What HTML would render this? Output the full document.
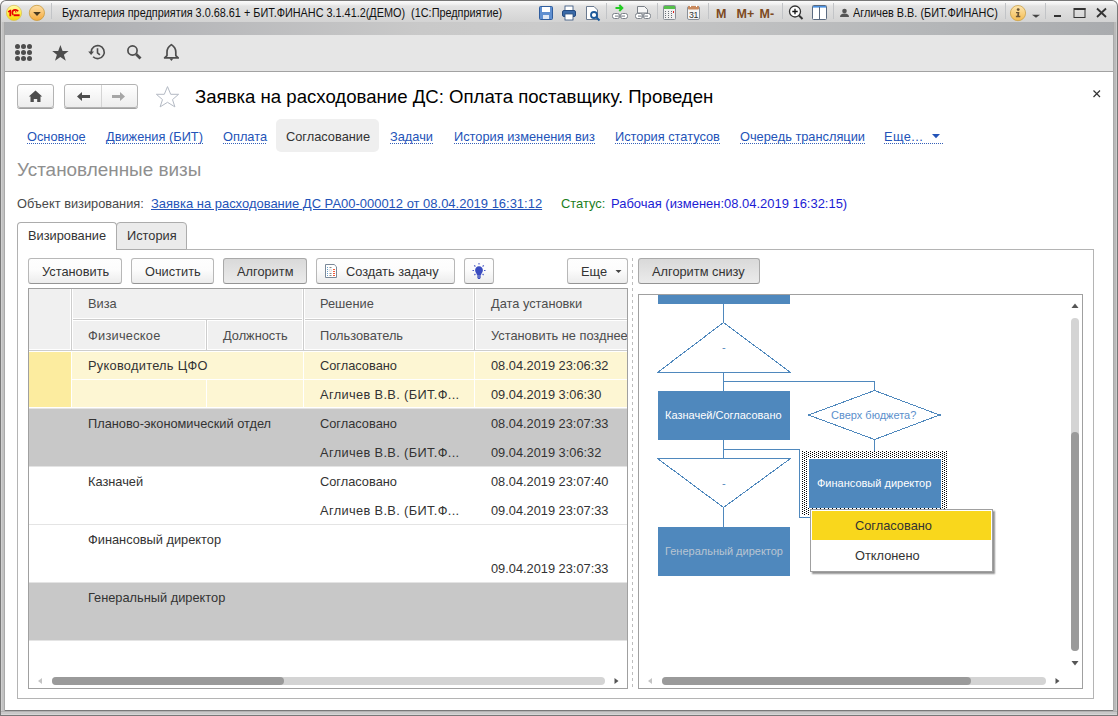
<!DOCTYPE html>
<html><head><meta charset="utf-8">
<style>
*{box-sizing:border-box;margin:0;padding:0}
html,body{width:1118px;height:716px;overflow:hidden;background:#fff}
body{position:relative;font-family:"Liberation Sans",sans-serif;color:#333}
.a{position:absolute}
.t{position:absolute;white-space:nowrap;line-height:1}
.lnk{color:#2353b8;}
.dot{position:absolute;height:1px;background:repeating-linear-gradient(90deg,#3560b8 0 1px,transparent 1px 2px)}
.btn{position:absolute;height:26px;border:1px solid #b8b8b8;border-bottom-color:#949494;border-radius:3px;background:linear-gradient(#fefefe 0,#fcfcfc 45%,#ececec 100%)}
.btn.pr{background:linear-gradient(#d9d9d9,#ebebeb);border-color:#a9a9a9;border-bottom-color:#949494}
</style></head><body>

<!-- window frame -->
<div class="a" style="left:0;top:0;width:1118px;height:716px;background:#787878;border-radius:6px 6px 0 0"></div>
<div class="a" style="left:1px;top:1px;width:1116px;height:21px;background:linear-gradient(#fbfbfb 0,#f2f2f2 3px,#e3e3e3 5px,#d3d3d3 21px);border-radius:5px 5px 0 0"></div>
<div class="a" style="left:1px;top:22px;width:1116px;height:13px;background:linear-gradient(90deg,#a9abae 0,#b4b5b8 150px,#c9c9c9 420px,#cbcbcb 540px,#b4b6b8 940px,#a9abae 1116px)"></div>
<div class="a" style="left:1px;top:22px;width:4px;height:693px;background:linear-gradient(90deg,#d0d0d0 0 1px,#c2c2c2 1px 3px,#a9a9a9 3px 4px)"></div>
<div class="a" style="left:1113px;top:22px;width:4px;height:693px;background:linear-gradient(90deg,#a9a9a9 0 1px,#b9b9b9 1px 3px,#cccccc 3px 4px)"></div>
<div class="a" style="left:1px;top:711px;width:1116px;height:4px;background:linear-gradient(#b2b2b2 0 1px,#c9c9c9 1px 3px,#d6d6d6 3px 4px)"></div>

<!-- toolbar -->
<div class="a" style="left:5px;top:35px;width:1108px;height:37px;background:#e6e6e6;border-bottom:1px solid #a2a2a2"></div>
<!-- content -->
<div class="a" style="left:5px;top:72px;width:1108px;height:638px;background:#fff"></div>


<!-- titlebar icons -->
<svg class="a" style="left:0;top:0" width="1118" height="35" viewBox="0 0 1118 35">
 <defs>
  <linearGradient id="gy" x1="0" y1="0" x2="0" y2="1"><stop offset="0" stop-color="#fffbb0"/><stop offset="0.5" stop-color="#fff04a"/><stop offset="1" stop-color="#f4d400"/></linearGradient>
  <linearGradient id="go2" x1="0" y1="0" x2="0" y2="1"><stop offset="0" stop-color="#fde6b0"/><stop offset="1" stop-color="#f4bc52"/></linearGradient>
  <linearGradient id="go" x1="0" y1="0" x2="0" y2="1"><stop offset="0" stop-color="#fde0a8"/><stop offset="1" stop-color="#f5a93c"/></linearGradient>
 </defs>
 <circle cx="14" cy="12.9" r="7.6" fill="url(#gy)" stroke="#d9c25a" stroke-width="0.8"/>
 <path d="M7.8 11.3 L10.1 9.7 H11.2 V16.2 H9.4 V12 L8.3 12.6 Z" fill="#e80000"/><path d="M18.2 11.3 C17.4 10.3 16.3 9.9 15.2 9.9 C13.4 9.9 12.3 11.2 12.3 12.8 C12.3 13.8 12.8 14.5 13.4 14.9" stroke="#e80000" stroke-width="1.7" fill="none"/><path d="M15 11.6 C15.6 11.6 16 12 16 12.5" stroke="#e80000" stroke-width="1.2" fill="none"/><rect x="13.6" y="14.3" width="6" height="1.9" fill="#e80000"/>
 <circle cx="36.9" cy="12.9" r="7.6" fill="url(#go)" stroke="#c99a3c" stroke-width="0.8"/>
 <path d="M33.2 12 L40.8 12 L37 15.9 Z" fill="#4a3a20"/>
 <rect x="51" y="3" width="1" height="16" fill="#c2c4c7"/>
 <!-- save -->
 <rect x="539.5" y="6.5" width="13" height="13" rx="1" fill="#5f8fd0" stroke="#2f5d9e"/>
 <rect x="542" y="7" width="8" height="5" fill="#fff"/>
 <rect x="543" y="15" width="6" height="4" fill="#dfe8f5"/>
 <!-- print -->
 <rect x="565" y="6" width="8" height="5" fill="#fff" stroke="#2f4f7a" stroke-width="0.8"/>
 <rect x="562.5" y="10.5" width="13" height="6" rx="1.5" fill="#3a6aa8" stroke="#244a80"/>
 <rect x="565" y="14" width="8" height="6" fill="#fff" stroke="#2f4f7a" stroke-width="0.8"/>
 <!-- preview -->
 <path d="M586.5 6.5 H594 L597.5 10 V19.5 H586.5 Z" fill="#fff" stroke="#6a7a90"/>
 <circle cx="594" cy="15" r="3" fill="none" stroke="#1d5a9a" stroke-width="1.8"/>
 <path d="M596 17 L599.5 20.5" stroke="#1d5a9a" stroke-width="2"/>
 <rect x="606" y="3" width="1" height="16" fill="#c2c4c7"/>
 <!-- link icons -->
 <path d="M615.5 8 H622 M619.3 5 L622.3 8 L619.3 11" stroke="#22cc22" stroke-width="2" fill="none"/>
 <rect x="612.5" y="13.5" width="7" height="5" rx="2" fill="#fff" stroke="#7a8088"/>
 <rect x="620.5" y="13.5" width="7" height="5" rx="2" fill="#fff" stroke="#7a8088"/>
 <rect x="615" y="15.5" width="10" height="1.2" fill="#8a9098"/>
 <path d="M637.5 6.5 H644.5 L647.5 9.5 V13 H637.5 Z" fill="#f6f6f6" stroke="#7a8088"/>
 <rect x="635.5" y="13.5" width="7" height="5" rx="2" fill="#fff" stroke="#7a8088"/>
 <rect x="643.5" y="13.5" width="7" height="5" rx="2" fill="#fff" stroke="#7a8088"/>
 <rect x="638" y="15.5" width="10" height="1.2" fill="#8a9098"/>
 <rect x="657" y="3" width="1" height="16" fill="#c2c4c7"/>
 <!-- calculator -->
 <rect x="663.5" y="5.5" width="12" height="14" rx="1" fill="#f0f0f0" stroke="#8a9098"/>
 <rect x="664" y="6" width="11" height="3" fill="#55c04a"/>
 <g fill="#6a7078"><rect x="665" y="11" width="1" height="1"/><rect x="668" y="11" width="1" height="1"/><rect x="671" y="11" width="1" height="1"/><rect x="665" y="13" width="1" height="1"/><rect x="668" y="13" width="1" height="1"/><rect x="671" y="13" width="1" height="1"/><rect x="665" y="15" width="1" height="1"/><rect x="668" y="15" width="1" height="1"/><rect x="671" y="15" width="1" height="1"/><rect x="665" y="17" width="1" height="1"/><rect x="668" y="17" width="1" height="1"/><rect x="671" y="17" width="1" height="1"/></g>
 <rect x="673" y="11" width="1" height="2" fill="#e02020"/>
 <!-- calendar -->
 <rect x="687.5" y="6.5" width="12" height="13" rx="1.5" fill="#f6f6f6" stroke="#8a9098"/>
 <rect x="688" y="6" width="11" height="3.5" rx="1" fill="#c98a5e"/>
 <rect x="690" y="5" width="1" height="2" fill="#fff"/><rect x="696" y="5" width="1" height="2" fill="#fff"/>
 <text x="689" y="18.2" font-family="Liberation Sans" font-size="8.8" fill="#333" letter-spacing="-0.3">31</text>
 <rect x="708" y="3" width="1" height="16" fill="#c2c4c7"/>
 <g font-family="Liberation Sans" font-weight="bold" fill="#7d4a22" font-size="12.5">
  <text x="716" y="17.5">M</text><text x="736.5" y="17.5">M+</text><text x="759.5" y="17.5">M-</text>
 </g>
 <rect x="782" y="3" width="1" height="16" fill="#c2c4c7"/>
 <!-- zoom -->
 <circle cx="795" cy="11.5" r="5.5" fill="#fff" stroke="#333" stroke-width="1.3"/>
 <path d="M792.3 11.5 H797.7 M795 8.8 V14.2" stroke="#111" stroke-width="1.3"/>
 <path d="M799 15.5 L802.5 19" stroke="#333" stroke-width="2"/>
 <!-- panel -->
 <rect x="812.5" y="5.5" width="14" height="14" rx="1" fill="#fff" stroke="#5a6a80"/>
 <rect x="813" y="6" width="13" height="1.6" fill="#4a90e0"/>
 <rect x="819" y="7" width="1" height="12" fill="#5a6a80"/>
 <rect x="833" y="3" width="1" height="16" fill="#c2c4c7"/>
 <!-- user -->
 <circle cx="844.5" cy="11" r="2.3" fill="#555"/>
 <path d="M840 17 Q840 13.5 844.5 13.5 Q849 13.5 849 17 Z" fill="#555"/>
 <rect x="1005" y="3" width="1" height="16" fill="#c2c4c7"/>
 <circle cx="1018" cy="13.1" r="7.6" fill="url(#go2)" stroke="#caa24a" stroke-width="0.8"/>
 <circle cx="1018.2" cy="9.6" r="1.4" fill="#6b5535"/><path d="M1016 11.9 H1019.4 L1018.9 15.8 H1020.3 V17.3 H1015.9 V15.8 H1017.2 L1017.5 13.2 H1016 Z" fill="#6b5535"/>
 <path d="M1032 14.8 H1040 L1036 17.8 Z" fill="#444"/>
 <rect x="1045" y="3" width="1" height="16" fill="#c2c4c7"/>
 <rect x="1054" y="15" width="7" height="2" fill="#333"/>
 <rect x="1074" y="8.5" width="11" height="9" fill="none" stroke="#333" stroke-width="1"/>
 <rect x="1074" y="8" width="11.5" height="2" fill="#333"/>
 <path d="M1097 8.5 L1106 17 M1106 8.5 L1097 17" stroke="#333" stroke-width="1.8"/>
</svg>
<div class="t" style="left:62px;top:7px;font-size:12px;color:#111;transform:scaleX(0.905);transform-origin:0 0">Бухгалтерия предприятия 3.0.68.61 + БИТ.ФИНАНС 3.1.41.2(ДЕМО)&nbsp; (1С:Предприятие)</div>
<div class="t" style="left:853px;top:7px;font-size:12px;color:#111;transform:scaleX(0.905);transform-origin:0 0">Агличев В.В. (БИТ.ФИНАНС)</div>

<!-- toolbar icons -->
<svg class="a" style="left:0;top:35px" width="200" height="36" viewBox="0 35 200 36">
 <g fill="#4d4d4d">
  <circle cx="17.5" cy="46.5" r="2.5"/><circle cx="23.5" cy="46.5" r="2.5"/><circle cx="29.5" cy="46.5" r="2.5"/>
  <circle cx="17.5" cy="52.5" r="2.5"/><circle cx="23.5" cy="52.5" r="2.5"/><circle cx="29.5" cy="52.5" r="2.5"/>
  <circle cx="17.5" cy="58.5" r="2.5"/><circle cx="23.5" cy="58.5" r="2.5"/><circle cx="29.5" cy="58.5" r="2.5"/>
 </g>
 <path d="M60.4 45 L62.6 51.1 L68.6 51.1 L63.9 54.7 L65.8 60.8 L60.4 57.1 L55 60.8 L56.9 54.7 L52.2 51.1 L58.2 51.1 Z" fill="#4d4d4d"/>
 <path d="M91.2 52.1 A6.5 6.5 0 1 1 93.1 56.7" fill="none" stroke="#4d4d4d" stroke-width="1.6"/>
 <path d="M88.2 51.6 H94 L91.1 54.9 Z" fill="#4d4d4d"/>
 <path d="M97.5 48.3 V52.8 L99.9 54.9" fill="none" stroke="#4d4d4d" stroke-width="1.6"/>
 <circle cx="132.5" cy="50.5" r="4.6" fill="none" stroke="#4d4d4d" stroke-width="1.7"/>
 <path d="M136.2 54.2 L140.5 58.5" stroke="#4d4d4d" stroke-width="2.8"/>
 <path d="M171.4 44.6 C168.6 46.4 167 48.6 167 52 V55.6 L164.6 57.9 H178.2 L175.8 55.6 V52 C175.8 48.6 174.2 46.4 171.4 44.6 Z" fill="none" stroke="#4d4d4d" stroke-width="1.7" stroke-linejoin="round"/>
 <path d="M169.4 58.4 H173.4 L171.4 60.9 Z" fill="#4d4d4d"/>
</svg>


<!-- form header -->
<div class="a" style="left:17px;top:84px;width:37px;height:24px;border:1px solid #b3b3b3;border-radius:3px;background:linear-gradient(#fff,#ededed);box-shadow:0 1px 0 #a0a0a0"></div>
<div class="a" style="left:64px;top:84px;width:74px;height:24px;border:1px solid #b3b3b3;border-radius:3px;background:linear-gradient(#fff,#ededed);box-shadow:0 1px 0 #a0a0a0"></div>
<div class="a" style="left:101px;top:85px;width:1px;height:22px;background:#d4d4d4"></div>
<svg class="a" style="left:0;top:72px" width="200" height="40" viewBox="0 72 200 40">
 <path d="M35.5 90.5 L28.8 96.5 H30.5 V102 H33.8 V99 H37.2 V102 H40.5 V96.5 H42.2 Z" fill="#4d4d4d"/>
 <path d="M77 96.5 L82 92 V95 H90 V98 H82 V101 Z" fill="#4d4d4d"/>
 <path d="M125 96.5 L120 92 V95 H112 V98 H120 V101 Z" fill="#a6a6a6"/>
 <path d="M167.5 86.6 L170.7 94.3 L178.6 94.3 L172.5 99.6 L174.9 106.9 L167.5 102.3 L160.1 106.9 L162.5 99.6 L156.4 94.3 L164.3 94.3 Z" fill="none" stroke="#b4bac4" stroke-width="1"/>
</svg>
<div class="t" style="left:195px;top:88px;font-size:18.6px;color:#000">Заявка на расходование ДС: Оплата поставщику. Проведен</div>
<svg class="a" style="left:1090px;top:86px" width="14" height="14" viewBox="1090 86 14 14"><path d="M1093.5 90.5 L1100 97 M1100 90.5 L1093.5 97" stroke="#333" stroke-width="1.2"/></svg>

<!-- nav links -->
<div class="a" style="left:276px;top:119px;width:103px;height:33px;background:#efefef;border-radius:5px"></div>
<div class="t lnk" style="left:27px;top:131px;font-size:12.8px">Основное</div>
<div class="t lnk" style="left:106px;top:131px;font-size:12.8px">Движения (БИТ)</div>
<div class="t lnk" style="left:223px;top:131px;font-size:12.8px">Оплата</div>
<div class="t" style="left:286px;top:131px;font-size:12.8px;color:#333">Согласование</div>
<div class="t lnk" style="left:390px;top:131px;font-size:12.8px">Задачи</div>
<div class="t lnk" style="left:454px;top:131px;font-size:12.8px">История изменения виз</div>
<div class="t lnk" style="left:615px;top:131px;font-size:12.8px">История статусов</div>
<div class="t lnk" style="left:740px;top:131px;font-size:12.8px">Очередь трансляции</div>
<div class="t lnk" style="left:884px;top:131px;font-size:12.8px;letter-spacing:0.4px">Еще...</div>
<svg class="a" style="left:930px;top:131px" width="12" height="10"><path d="M2 3 H10 L6 7.3 Z" fill="#2353b8"/></svg>

<div class="dot" style="left:27px;top:143px;width:59px"></div>
<div class="dot" style="left:106px;top:143px;width:97px"></div>
<div class="dot" style="left:223px;top:143px;width:44px"></div>
<div class="dot" style="left:390px;top:143px;width:44px"></div>
<div class="dot" style="left:454px;top:143px;width:142px"></div>
<div class="dot" style="left:615px;top:143px;width:105px"></div>
<div class="dot" style="left:740px;top:143px;width:125px"></div>
<div class="dot" style="left:884px;top:143px;width:59px"></div>
<div class="t" style="left:17px;top:161px;font-size:18.9px;color:#8f8f8f">Установленные визы</div>
<div class="t" style="left:17px;top:198px;font-size:12.8px;color:#4a4a4a">Объект визирования:</div>
<div class="t lnk" style="left:151px;top:198px;font-size:12.97px;text-decoration:underline">Заявка на расходование ДС РА00-000012 от 08.04.2019 16:31:12</div>
<div class="t" style="left:561px;top:198px;font-size:12.9px;color:#1b7d1b">Статус:</div>
<div class="t" style="left:611px;top:198px;font-size:12.96px;color:#1c1cd4">Рабочая (изменен:08.04.2019 16:32:15)</div>


<!-- tabs panel -->
<div class="a" style="left:17px;top:249px;width:1077px;height:450px;border:1px solid #b4b4b4"></div>
<div class="a" style="left:116px;top:222px;width:71px;height:28px;border:1px solid #acacac;border-radius:4px 4px 0 0;background:#ebebeb"></div>
<div class="a" style="left:17px;top:222px;width:100px;height:28px;border:1px solid #acacac;border-bottom:none;border-radius:4px 4px 0 0;background:#fff"></div>
<div class="t" style="left:28px;top:230px;font-size:12.8px;color:#333">Визирование</div>
<div class="t" style="left:127px;top:230px;font-size:12.8px;color:#333">История</div>

<!-- buttons -->
<div class="btn" style="left:28px;top:258px;width:94px"></div>
<div class="btn" style="left:131px;top:258px;width:83px"></div>
<div class="btn pr" style="left:223px;top:258px;width:84px"></div>
<div class="btn" style="left:316px;top:258px;width:139px"></div>
<div class="btn" style="left:464px;top:258px;width:30px"></div>
<div class="btn" style="left:567px;top:258px;width:61px"></div>
<div class="btn pr" style="left:638px;top:258px;width:122px"></div>
<div class="t" style="left:42px;top:266px;font-size:12.8px;color:#333">Установить</div>
<div class="t" style="left:145px;top:266px;font-size:12.8px;color:#333">Очистить</div>
<div class="t" style="left:237px;top:266px;font-size:12.8px;color:#333">Алгоритм</div>
<div class="t" style="left:346px;top:266px;font-size:12.8px;color:#333">Создать задачу</div>
<div class="t" style="left:581px;top:266px;font-size:12.8px;color:#333">Еще</div>
<div class="t" style="left:652px;top:266px;font-size:12.8px;color:#333">Алгоритм снизу</div>
<svg class="a" style="left:320px;top:260px" width="180" height="24" viewBox="320 260 180 24">
 <path d="M325.5 264.5 H334.2 L336.5 266.8 V277.5 H325.5 Z" fill="#fff" stroke="#7a8898"/>
 <g fill="#6aa0cc"><rect x="327" y="267" width="1" height="1"/><rect x="327" y="269" width="1" height="1"/><rect x="327" y="271" width="1" height="1"/><rect x="327" y="273" width="1" height="1"/><rect x="327" y="275" width="1" height="1"/></g>
 <g fill="#8a8a8a"><rect x="329.5" y="267" width="2" height="1"/><rect x="329.5" y="273" width="2" height="1"/><rect x="329.5" y="275" width="2" height="1"/></g>
 <circle cx="330.4" cy="270.4" r="1.2" fill="none" stroke="#c8c8c8" stroke-width="0.6"/>
 <g fill="#f05a3a"><rect x="333" y="269" width="2" height="1"/><rect x="333" y="271" width="2" height="1"/><rect x="333" y="273" width="2" height="1"/><rect x="333" y="275" width="2" height="1"/></g>
 <path d="M479 266.3 C476.6 266.3 475.1 268.1 475.1 270.3 C475.1 272.2 476.6 273.3 477 275 H481 C481.4 273.3 482.9 272.2 482.9 270.3 C482.9 268.1 481.4 266.3 479 266.3 Z" fill="#3a4cc0"/>
 <path d="M477.2 275 H480.8 V278 C480.3 278.8 477.7 278.8 477.2 278 Z" fill="#6270c8"/>
 <rect x="478" y="278" width="2" height="1" fill="#3a4cc0"/>
 <g stroke="#4a5ac4" stroke-width="1.1"><path d="M479 263 V264.5"/><path d="M472.5 270.5 H474"/><path d="M484 270.5 H485.5"/><path d="M474.2 265.3 L475.4 266.5"/><path d="M483.8 265.3 L482.6 266.5"/><path d="M474.4 275 L475.4 274"/><path d="M483.6 275 L482.6 274"/></g>
</svg>
<svg class="a" style="left:612px;top:266px" width="14" height="10" viewBox="612 266 14 10"><path d="M615.5 270 H621.5 L618.5 273 Z" fill="#444"/></svg>
<!-- dashed splitter -->
<div class="a" style="left:632px;top:258px;width:1px;height:432px;background:repeating-linear-gradient(180deg,#bdbdbd 0 3px,transparent 3px 6px)"></div>

<!-- table -->
<div class="a" style="left:28px;top:288px;width:600px;height:401px;border:1px solid #a0a0a0;background:#fff;overflow:hidden">
 <!-- header -->
 <div class="a" style="left:0;top:0;width:598px;height:62px;background:#f0f0f0"></div>
 <div class="a" style="left:0;top:61px;width:598px;height:1px;background:#cdcdcd"></div>
 <div class="a" style="left:0;top:60px;width:598px;height:1px;background:#fff"></div>
 <div class="a" style="left:42px;top:30px;width:556px;height:1px;background:#cdcdcd"></div>
 <div class="a" style="left:43px;top:29px;width:555px;height:1px;background:#fff"></div>
 <div class="a" style="left:43px;top:31px;width:555px;height:1px;background:#fff"></div>
 <div class="a" style="left:41px;top:0;width:1px;height:61px;background:#fff"></div>
 <div class="a" style="left:42px;top:0;width:1px;height:61px;background:#cdcdcd"></div>
 <div class="a" style="left:43px;top:0;width:1px;height:61px;background:#fff"></div>
 <div class="a" style="left:273px;top:0;width:1px;height:61px;background:#fff"></div>
 <div class="a" style="left:274px;top:0;width:1px;height:61px;background:#cdcdcd"></div>
 <div class="a" style="left:275px;top:0;width:1px;height:61px;background:#fff"></div>
 <div class="a" style="left:444px;top:0;width:1px;height:61px;background:#fff"></div>
 <div class="a" style="left:445px;top:0;width:1px;height:61px;background:#cdcdcd"></div>
 <div class="a" style="left:446px;top:0;width:1px;height:61px;background:#fff"></div>
 <div class="a" style="left:176px;top:31px;width:1px;height:30px;background:#fff"></div>
 <div class="a" style="left:177px;top:31px;width:1px;height:30px;background:#cdcdcd"></div>
 <div class="a" style="left:178px;top:31px;width:1px;height:30px;background:#fff"></div>
 <!-- body rows -->
 <div class="a" style="left:0;top:62px;width:598px;height:57px;background:#fdf6d3"></div>
 <div class="a" style="left:0;top:62px;width:42px;height:56px;background:#fcec9f"></div>
 <div class="a" style="left:42px;top:62px;width:1px;height:57px;background:#fff"></div>
 <div class="a" style="left:0;top:62px;width:598px;height:1px;background:#fff"></div>
 <div class="a" style="left:43px;top:90px;width:555px;height:1px;background:#fff"></div>
 <div class="a" style="left:0;top:118px;width:598px;height:1px;background:#fff"></div>
 <div class="a" style="left:177px;top:91px;width:1px;height:27px;background:#fff"></div>
 <div class="a" style="left:274px;top:62px;width:1px;height:56px;background:#fff"></div>
 <div class="a" style="left:445px;top:62px;width:1px;height:56px;background:#fff"></div>
 <div class="a" style="left:0;top:119px;width:598px;height:1px;background:#e4e4e4"></div>
 <div class="a" style="left:0;top:120px;width:598px;height:57px;background:#c8c8c8"></div>
 <div class="a" style="left:0;top:177px;width:598px;height:1px;background:#e4e4e4"></div>
 <div class="a" style="left:0;top:235px;width:598px;height:1px;background:#e4e4e4"></div>
 <div class="a" style="left:0;top:293px;width:598px;height:1px;background:#e4e4e4"></div>
 <div class="a" style="left:0;top:294px;width:598px;height:57px;background:#c8c8c8"></div>
 <div class="a" style="left:0;top:351px;width:598px;height:1px;background:#e4e4e4"></div>
</div>

<div class="a" style="left:29px;top:289px;width:598px;height:399px;overflow:hidden">
 <div class="t" style="left:59px;top:9px;font-size:12.8px;color:#4d4d4d">Виза</div>
 <div class="t" style="left:291px;top:9px;font-size:12.8px;color:#4d4d4d">Решение</div>
 <div class="t" style="left:462px;top:9px;font-size:12.8px;color:#4d4d4d">Дата установки</div>
 <div class="t" style="left:59px;top:41px;font-size:12.8px;color:#4d4d4d;letter-spacing:0.25px">Физическое</div>
 <div class="t" style="left:194px;top:41px;font-size:12.8px;color:#4d4d4d">Должность</div>
 <div class="t" style="left:291px;top:41px;font-size:12.8px;color:#4d4d4d">Пользователь</div>
 <div class="t" style="left:462px;top:41px;font-size:12.8px;color:#4d4d4d">Установить не позднее</div>
 <div class="t" style="left:59px;top:71px;font-size:12.8px;color:#333;letter-spacing:0.28px">Руководитель ЦФО</div>
 <div class="t" style="left:291px;top:71px;font-size:12.8px;color:#333">Согласовано</div>
 <div class="t" style="left:462px;top:71px;font-size:12.8px;color:#333">08.04.2019 23:06:32</div>
 <div class="t" style="left:291px;top:100px;font-size:12.8px;color:#333;letter-spacing:0.36px">Агличев В.В. (БИТ.Ф...</div>
 <div class="t" style="left:462px;top:100px;font-size:12.8px;color:#333">09.04.2019 3:06:30</div>
 <div class="t" style="left:59px;top:129px;font-size:12.8px;color:#333">Планово-экономический отдел</div>
 <div class="t" style="left:291px;top:129px;font-size:12.8px;color:#333">Согласовано</div>
 <div class="t" style="left:462px;top:129px;font-size:12.8px;color:#333">08.04.2019 23:07:33</div>
 <div class="t" style="left:291px;top:158px;font-size:12.8px;color:#333;letter-spacing:0.36px">Агличев В.В. (БИТ.Ф...</div>
 <div class="t" style="left:462px;top:158px;font-size:12.8px;color:#333">09.04.2019 3:06:32</div>
 <div class="t" style="left:59px;top:187px;font-size:12.8px;color:#333">Казначей</div>
 <div class="t" style="left:291px;top:187px;font-size:12.8px;color:#333">Согласовано</div>
 <div class="t" style="left:462px;top:187px;font-size:12.8px;color:#333">08.04.2019 23:07:40</div>
 <div class="t" style="left:291px;top:216px;font-size:12.8px;color:#333;letter-spacing:0.36px">Агличев В.В. (БИТ.Ф...</div>
 <div class="t" style="left:462px;top:216px;font-size:12.8px;color:#333">09.04.2019 23:07:33</div>
 <div class="t" style="left:59px;top:245px;font-size:12.8px;color:#333">Финансовый директор</div>
 <div class="t" style="left:462px;top:274px;font-size:12.8px;color:#333">09.04.2019 23:07:33</div>
 <div class="t" style="left:59px;top:303px;font-size:12.8px;color:#333">Генеральный директор</div>
</div>
<!-- table scrollbar -->
<div class="a" style="left:52px;top:677px;width:553px;height:8px;border-radius:4px;background:#d4d4d4"></div>
<div class="a" style="left:52px;top:677px;width:232px;height:8px;border-radius:4px;background:#9a9a9a"></div>
<svg class="a" style="left:30px;top:670px" width="600" height="20" viewBox="30 670 600 20">
 <path d="M38 681 L42 678 V684 Z" fill="#c4c4c4"/>
 <path d="M618.5 681 L614.5 678 V684 Z" fill="#555"/>
</svg>


<!-- diagram panel -->
<div class="a" style="left:638px;top:294px;width:445px;height:395px;border:1px solid #a0a0a0;background:#fff"></div>
<svg class="a" style="left:639px;top:295px" width="443" height="393" viewBox="639 295 443 393" shape-rendering="crispEdges">
 <defs>
  <pattern id="chk" x="802" y="451" width="4" height="2" patternUnits="userSpaceOnUse"><rect x="0" y="0" width="1" height="1" fill="#000"/><rect x="2" y="1" width="1" height="1" fill="#000"/></pattern>
 </defs>
 <g fill="#4f88bd">
  <rect x="658" y="295" width="132" height="9"/>
  <rect x="658" y="391" width="132" height="49"/>
  <rect x="658" y="527" width="132" height="49"/>
 </g>
 <g stroke="#4f88bd" stroke-width="1" fill="none">
  <path d="M723.5 304 V322"/>
  <path d="M723.5 372 V391"/>
  <path d="M723.5 381.5 H874.5 V391"/>
  <path d="M723.5 440 V458"/>
  <path d="M723.5 449.5 H799.5 V517.5 H811"/>
  <path d="M723.5 507 V527"/>
  <path d="M874.5 439 V451"/>
 </g>
 <g stroke="#4f88bd" stroke-width="1" fill="none" shape-rendering="crispEdges">
  <path d="M723.5 322.5 L790.5 372.5 H657.5 Z"/>
  <path d="M657.5 458.5 H790.5 L723.5 507.5 Z"/>
  <path d="M874.5 390.5 L939.5 415 L874.5 439.5 L808.5 415 Z"/>
 </g>
 <rect x="939" y="414" width="2" height="2" fill="#4f88bd"/>
 <rect x="802" y="451" width="146" height="64" fill="url(#chk)"/>
 <rect x="807" y="458" width="135" height="50" fill="#fff"/>
 <rect x="809" y="459" width="132" height="49" fill="#4f88bd"/>
</svg>
<div class="t" style="left:722px;top:342px;font-size:11px;color:#4f88bd">-</div>
<div class="t" style="left:722px;top:478px;font-size:11px;color:#4f88bd">-</div>
<div class="t" style="left:665px;top:410px;font-size:11px;color:#fff">Казначей/Согласовано</div>
<div class="t" style="left:831px;top:410px;font-size:11px;color:#5b8fcc">Сверх бюджета?</div>
<div class="t" style="left:817px;top:478px;font-size:11px;color:#fff">Финансовый директор</div>
<div class="t" style="left:665px;top:546px;font-size:11px;color:#b9c5d2">Генеральный директор</div>

<!-- popup -->
<div class="a" style="left:810px;top:509px;width:183px;height:63px;border:1px solid #a0a0a0;background:#fff;box-shadow:2px 2px 1.5px rgba(0,0,0,0.42)"></div>
<div class="a" style="left:812px;top:511px;width:179px;height:29px;background:#f9d71c"></div>
<div class="t" style="left:855px;top:520px;font-size:12.8px;color:#333">Согласовано</div>
<div class="t" style="left:855px;top:550px;font-size:12.8px;color:#333">Отклонено</div>

<!-- diagram scrollbars -->
<div class="a" style="left:1071px;top:318px;width:8px;height:333px;border-radius:4px;background:#d4d4d4"></div>
<div class="a" style="left:1071px;top:432px;width:8px;height:219px;border-radius:4px;background:#9a9a9a"></div>
<div class="a" style="left:662px;top:677px;width:384px;height:8px;border-radius:4px;background:#d4d4d4"></div>
<div class="a" style="left:662px;top:677px;width:309px;height:8px;border-radius:4px;background:#9a9a9a"></div>
<svg class="a" style="left:640px;top:296px" width="440" height="392" viewBox="640 296 440 392">
 <path d="M1075 303.5 L1078.5 308 H1071.5 Z" fill="#555"/>
 <path d="M1075 665.5 L1078.5 661 H1071.5 Z" fill="#555"/>
 <path d="M648 681 L652 678 V684 Z" fill="#c4c4c4"/>
 <path d="M1059.5 681 L1055.5 678 V684 Z" fill="#555"/>
</svg>

</body></html>
